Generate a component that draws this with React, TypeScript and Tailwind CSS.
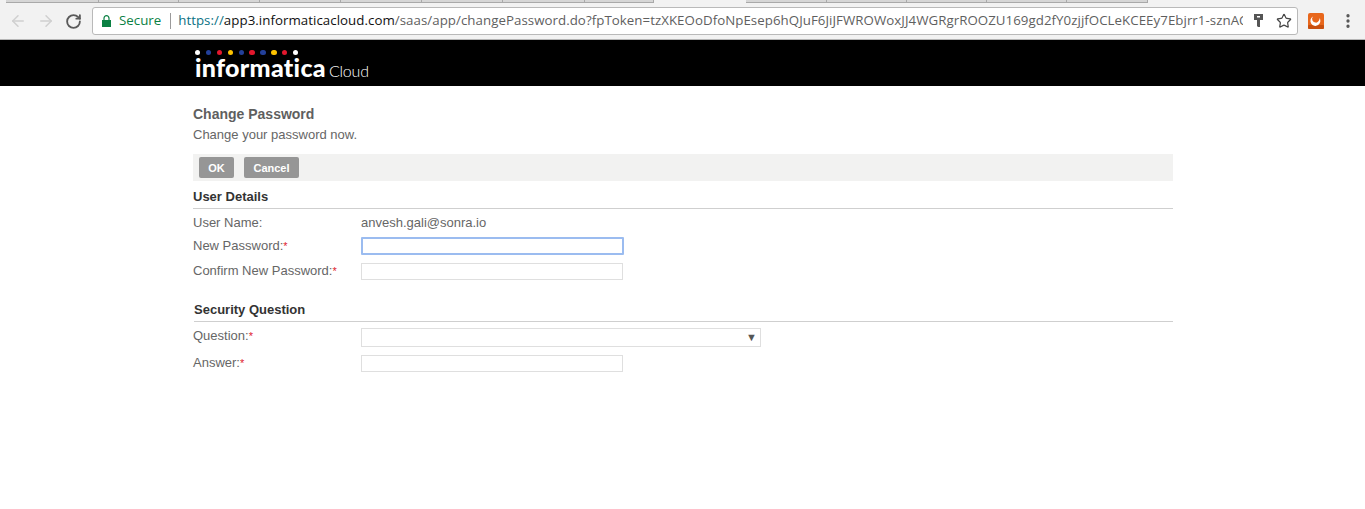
import { ArrowLeft, ArrowRight, RotateCw, Star, EllipsisVertical } from "lucide-react";

const DOTS = ["bg-white", "bg-[#23409a]", "bg-[#e3172d]", "bg-[#fdc300]", "bg-[#23409a]", "bg-[#e3172d]", "bg-[#23409a]", "bg-[#fdc300]", "bg-[#e3172d]", "bg-white"];
const LEFT_TABS = [93, 80, 81, 81, 81, 81, 82, 69];
const RIGHT_TABS = [81, 80, 80, 80, 81];

function Req() {
  return <span className="text-[#e0222f] text-[11px]">*</span>;
}

function Row({ label, required, drop, className, children }: { label: string; required?: boolean; drop?: boolean; className?: string; children: React.ReactNode }) {
  return (
    <div className={`flex items-start ${className ?? ""}`}>
      <div className={`w-[168px] shrink-0 ${drop ? "mt-px" : ""}`}>
        {label}
        {required && <Req />}
      </div>
      {children}
    </div>
  );
}

function Field({ focus }: { focus?: boolean }) {
  return (
    <input
      className={
        focus
          ? "w-[263px] h-[18px] border-2 border-[#9bbcf0] rounded-[1px] outline-none bg-white"
          : "w-[262px] h-[17px] border border-[#dfdfdf] outline-none bg-white"
      }
    />
  );
}

function TabEdges({ widths }: { widths: number[] }) {
  return (
    <>
      {widths.map((w, i) => (
        <div key={i} style={{ width: w }} className="h-[3px] bg-[#d6d6d6] border-r border-b border-[#a9a9a9]" />
      ))}
    </>
  );
}

function Browser() {
  return (
    <div className="h-[40px] bg-[#f2f2f2] border-b border-[#b5b5b5] font-['Open_Sans',sans-serif]">
      <div className="flex h-[3px] pl-[6px]">
        <TabEdges widths={LEFT_TABS} />
        <div className="w-[92px]" />
        <TabEdges widths={RIGHT_TABS} />
      </div>
      <div className="flex items-center h-[36px]">
        <ArrowLeft className="ml-[9px] text-[#d0d0d0]" size={18} strokeWidth={2} />
        <ArrowRight className="ml-[10px] text-[#d0d0d0]" size={18} strokeWidth={2} />
        <RotateCw className="ml-[10px] text-[#5a5a5a]" size={17} strokeWidth={2.6} />
        <div className="ml-[10px] w-[1206px] h-[28px] bg-white border border-[#b9b9b9] rounded-[3px] flex items-center text-[13.3px] overflow-hidden">
          <svg className="ml-[9px] shrink-0" width="9" height="12" viewBox="0 0 9 12">
            <path d="M2 5V3.2a2.5 2.5 0 0 1 5 0V5" fill="none" stroke="#0b8043" strokeWidth="1.2" />
            <rect x="0" y="5" width="9" height="7" fill="#0b8043" />
          </svg>
          <span className="ml-[8px] text-[#0b8043]">Secure</span>
          <span className="ml-[9px] w-[1px] h-[16px] bg-[#9a9a9a] shrink-0" />
          <div className="ml-[7px] w-[1065px] overflow-hidden whitespace-nowrap text-[#5f5f5f] tracking-[0.04px]">
            <span className="text-[#0b7285]">https://</span>
            <span className="text-[#111]">app3.informaticacloud.com</span>
            /saas/app/changePassword.do?fpToken=tzXKEOoDfoNpEsep6hQJuF6JiJFWROWoxJJ4WGRgrROOZU169gd2fY0zjjfOCLeKCEEy7Ebjrr1-sznAC
          </div>
          <svg className="ml-[11px] shrink-0" width="9" height="14" viewBox="0 0 9 14">
            <path d="M0 0h9v6H6v7H4L3 12V6H0z" fill="#555" />
            <rect x="3" y="2" width="3" height="1.5" fill="#fff" />
          </svg>
          <Star className="ml-[13px] text-[#444] shrink-0" size={16} strokeWidth={1.8} />
        </div>
        <svg className="ml-[10px] shrink-0" width="16" height="16" viewBox="0 0 16 16">
          <rect width="16" height="16" rx="2" fill="#e8671c" />
          <rect y="12" width="16" height="4" rx="1" fill="#c9500f" />
          <path d="M5 3.5a5 5 0 1 0 6.5 1.5 4 4 0 0 1-3.5 4.5A3.6 3.6 0 0 1 5 3.5z" fill="#fff" />
          <circle cx="8.5" cy="8" r="1.4" fill="#e8671c" />
        </svg>
        <EllipsisVertical className="ml-[15px] text-[#555]" size={18} strokeWidth={2.4} />
      </div>
    </div>
  );
}

function Logo() {
  return (
    <div className="h-[46px] bg-black pl-[195px] pt-[10px]">
      <div className="flex gap-[5.6px]">
        {DOTS.map((c, i) => (
          <span key={i} className={`w-[5.3px] h-[5.3px] rounded-full ${c}`} />
        ))}
      </div>
      <div className="flex items-baseline text-white leading-none">
        <span className="font-['Lato',sans-serif] font-black text-[25px] tracking-[0.3px]">informatica</span>
        <span className="ml-[3px] font-['Lato',sans-serif] font-light text-[16px] tracking-[-0.2px]">Cloud</span>
      </div>
    </div>
  );
}

export default function App() {
  return (
    <div className="h-[509px] bg-white overflow-hidden font-['Liberation_Sans',Arial,sans-serif] text-[#666]">
      <Browser />
      <Logo />
      <div className="ml-[193px] w-[980px]">
        <h1 className="mt-[20px] text-[14px] leading-[16px] font-bold text-[#5f5f5f]">Change Password</h1>
        <p className="mt-[5px] text-[13px] leading-[16px]">Change your password now.</p>
        <div className="mt-[11px] h-[27px] bg-[#f2f2f1] flex items-center gap-[10px] pl-[6px]">
          <button className="w-[35px] h-[21px] pt-[1px] rounded-[2px] bg-[#969696] text-white text-[11px] font-bold">OK</button>
          <button className="w-[55px] h-[21px] pt-[1px] rounded-[2px] bg-[#969696] text-white text-[11px] font-bold">Cancel</button>
        </div>
        <h2 className="mt-[8px] pb-[3px] border-b border-[#cfcfcf] text-[13px] leading-[16px] font-bold text-[#333]">User Details</h2>
        <div className="text-[13px] leading-[16px]">
          <Row label="User Name:" className="mt-[6px]">anvesh.gali@sonra.io</Row>
          <Row label="New Password:" required drop className="mt-[6px]"><Field focus /></Row>
          <Row label="Confirm New Password:" required className="mt-[8px]"><Field /></Row>
        </div>
        <h2 className="mt-[22px] ml-[1px] pb-[3px] border-b border-[#cfcfcf] text-[13px] leading-[16px] font-bold text-[#333]">Security Question</h2>
        <div className="text-[13px] leading-[16px]">
          <Row label="Question:" required className="mt-[6px]">
            <div className="w-[400px] h-[19px] border border-[#dfdfdf] flex items-center justify-end pr-[3px] pb-px text-[11px] text-[#555]">▼</div>
          </Row>
          <Row label="Answer:" required className="mt-[8px]"><Field /></Row>
        </div>
      </div>
    </div>
  );
}
